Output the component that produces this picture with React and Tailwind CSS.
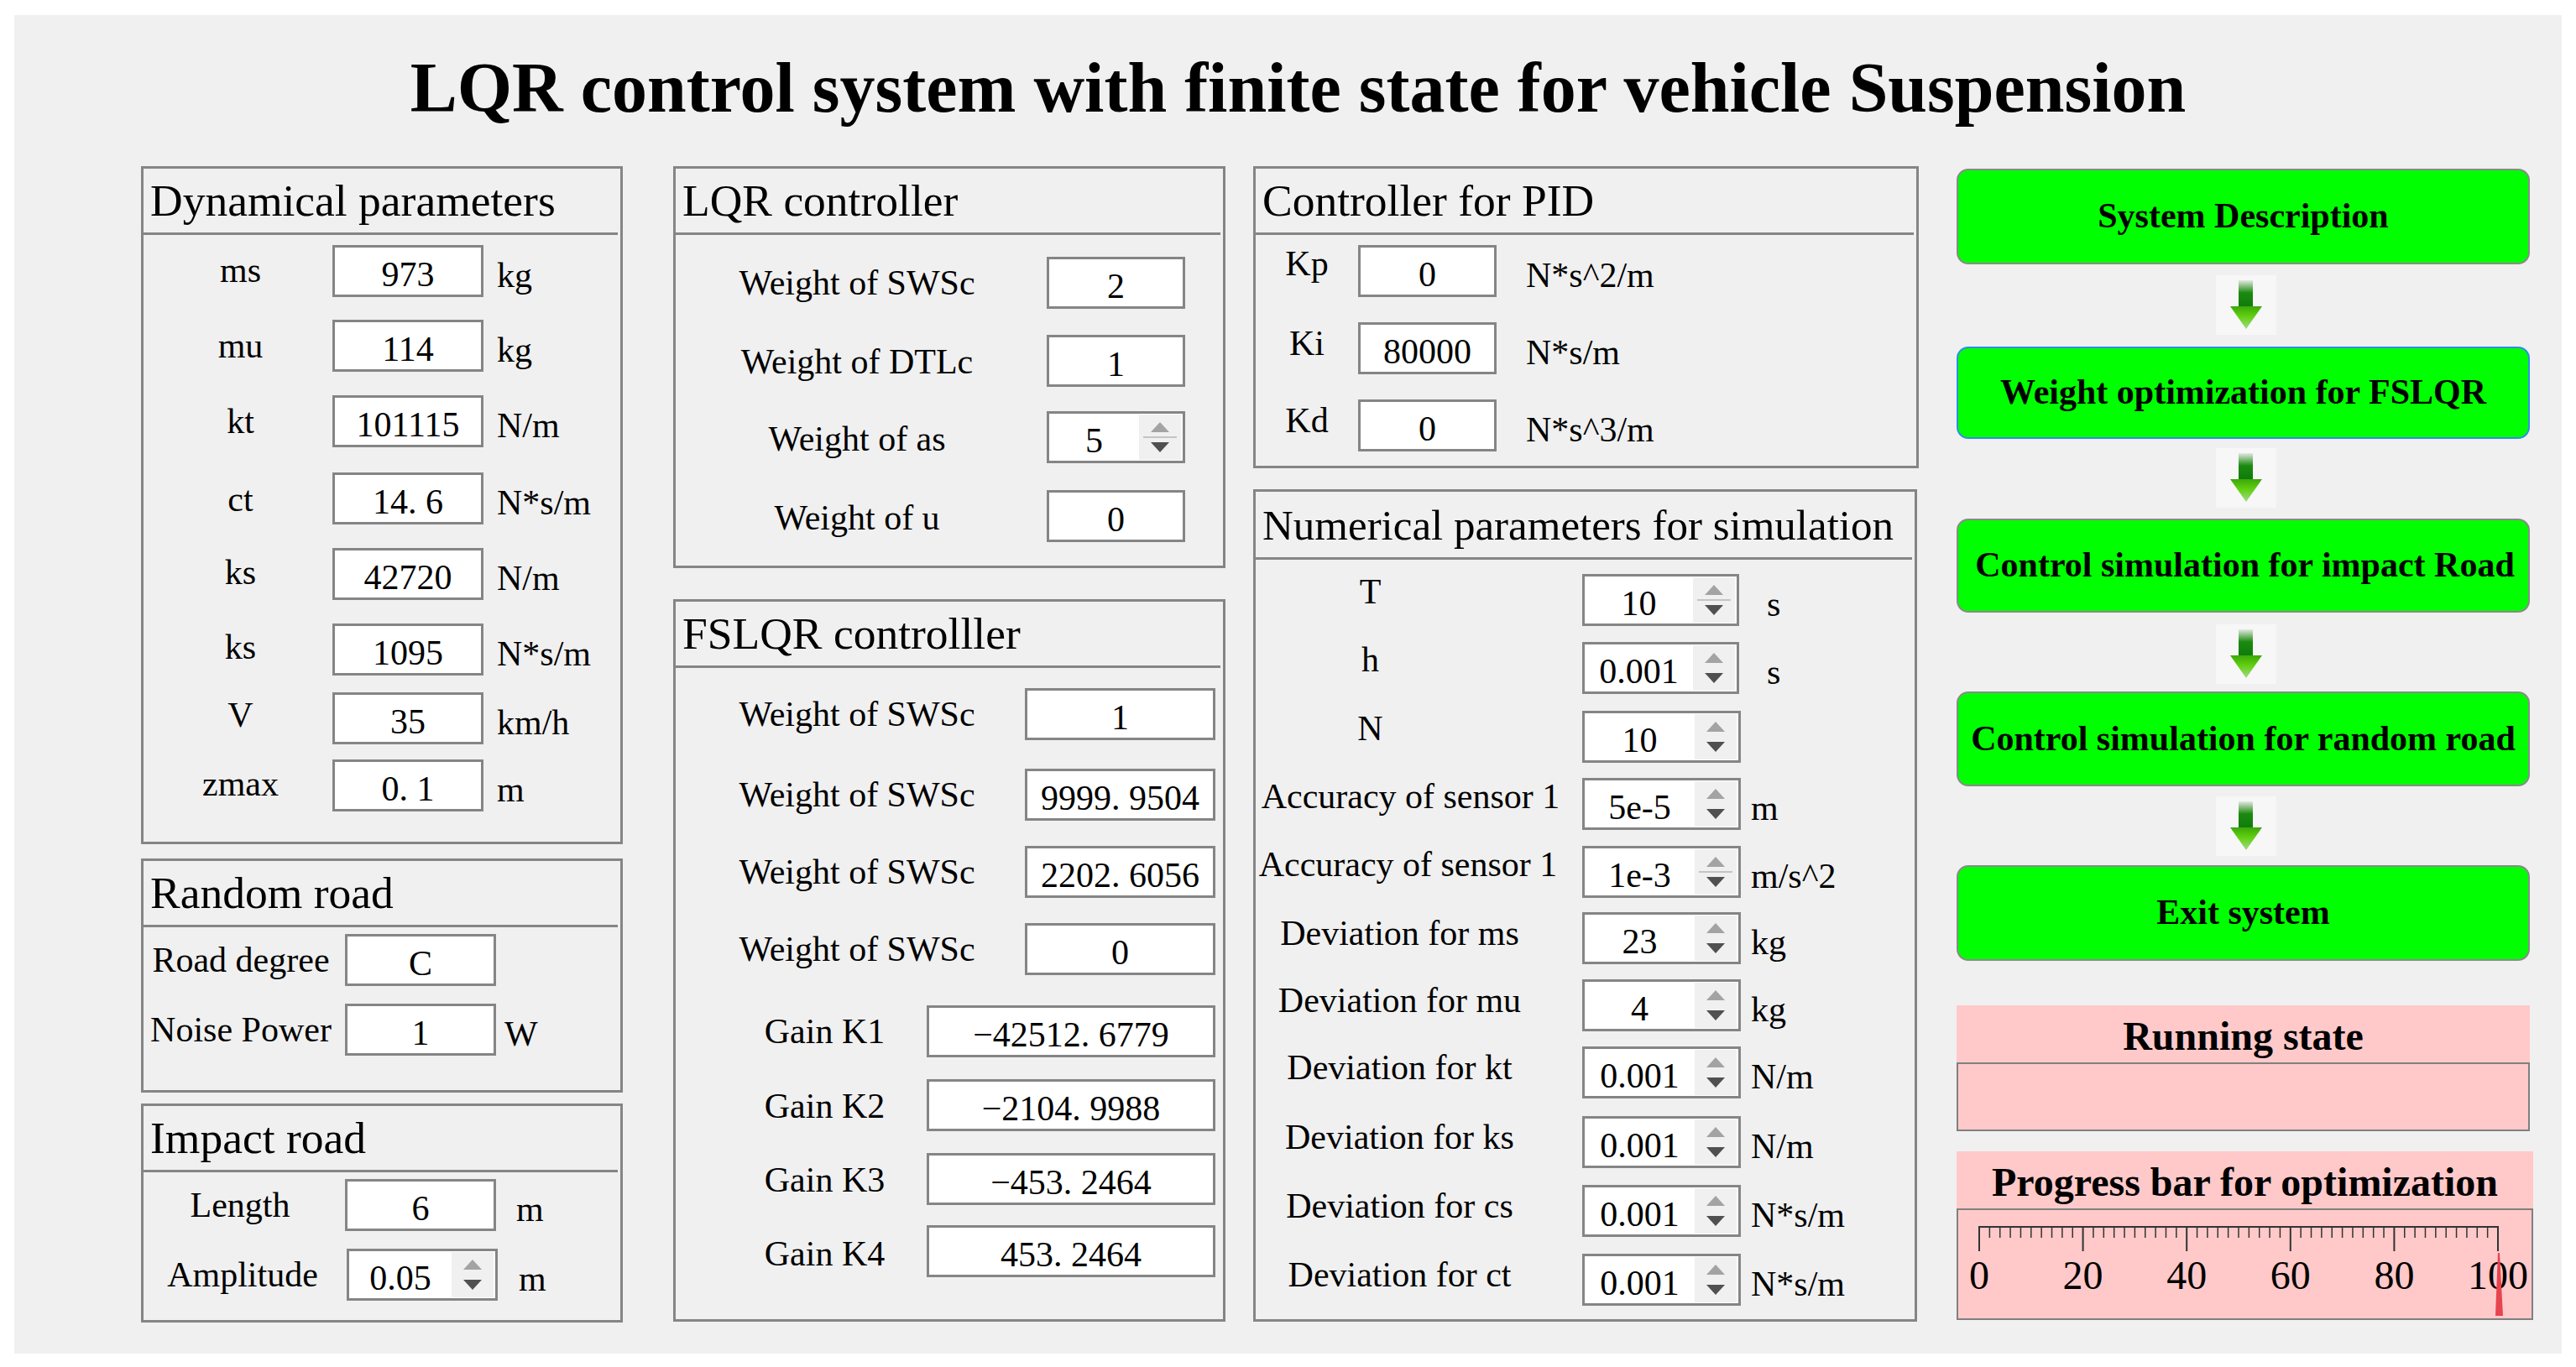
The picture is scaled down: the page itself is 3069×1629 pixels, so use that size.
const serif = { fontFamily: '"Liberation Serif", "Times New Roman", serif' };

const dynamicalRows = [
  { label: 'ms', value: '973', unit: 'kg', rowCls: 'mt-[12px]', labelPad: 'pb-[2px]' },
  { label: 'mu', value: '114', unit: 'kg', rowCls: 'mt-[27px]', labelPad: 'pb-0' },
  { label: 'kt', value: '101115', unit: 'N/m', rowCls: 'mt-[28px]', labelPad: 'pb-0' },
  { label: 'ct', value: '14. 6', unit: 'N*s/m', rowCls: 'mt-[30px]', labelPad: 'pt-[2px]' },
  { label: 'ks', value: '42720', unit: 'N/m', rowCls: 'mt-[28px]', labelPad: 'pb-[4px]' },
  { label: 'ks', value: '1095', unit: 'N*s/m', rowCls: 'mt-[28px]', labelPad: 'pb-[6px]' },
  { label: 'V', value: '35', unit: 'km/h', rowCls: 'mt-[20px]', labelPad: 'pb-[8px]' },
  { label: 'zmax', value: '0. 1', unit: 'm', rowCls: 'mt-[18px]', labelPad: 'pb-[4px]' },
];

const lqrRows = [
  { label: 'Weight of SWSc', value: '2', rowCls: 'mt-[26px]', labelCls: 'w-[442px] pr-[10px]' },
  { label: 'Weight of DTLc', value: '1', rowCls: 'mt-[31px]', labelCls: 'w-[442px] pr-[10px] pt-[2px]' },
  { label: 'Weight of as', value: '5', spin: true, sep: true, rowCls: 'mt-[29px]', labelCls: 'w-[442px] pr-[10px] pt-[4px]' },
  { label: 'Weight of u', value: '0', rowCls: 'mt-[32px]', labelCls: 'w-[442px] pr-[10px] pt-[4px]' },
];

const fslqrRows = [
  { label: 'Weight of SWSc', value: '1', rowCls: 'mt-[24px]', labelCls: 'w-[416px] pl-[16px]', fieldCls: 'w-[227px]' },
  { label: 'Weight of SWSc', value: '9999. 9504', rowCls: 'mt-[34px]', labelCls: 'w-[416px] pl-[16px]', fieldCls: 'w-[227px]' },
  { label: 'Weight of SWSc', value: '2202. 6056', rowCls: 'mt-[30px]', labelCls: 'w-[416px] pl-[16px]', fieldCls: 'w-[227px]' },
  { label: 'Weight of SWSc', value: '0', rowCls: 'mt-[30px]', labelCls: 'w-[416px] pl-[16px]', fieldCls: 'w-[227px]' },
  { label: 'Gain K1', value: '−42512. 6779', rowCls: 'mt-[36px]', labelCls: 'w-[299px] pl-[56px]', fieldCls: 'w-[344px]' },
  { label: 'Gain K2', value: '−2104. 9988', rowCls: 'mt-[26px]', labelCls: 'w-[299px] pl-[56px] pt-[2px]', fieldCls: 'w-[344px]' },
  { label: 'Gain K3', value: '−453. 2464', rowCls: 'mt-[26px]', labelCls: 'w-[299px] pl-[56px] pt-[2px]', fieldCls: 'w-[344px]' },
  { label: 'Gain K4', value: '453. 2464', rowCls: 'mt-[24px]', labelCls: 'w-[299px] pl-[56px] pt-[6px]', fieldCls: 'w-[344px]' },
];

const pidRows = [
  { label: 'Kp', value: '0', unit: 'N*s^2/m', rowCls: 'mt-[12px]', labelCls: 'w-[122px] pb-[18px]' },
  { label: 'Ki', value: '80000', unit: 'N*s/m', rowCls: 'mt-[30px]', labelCls: 'w-[122px] pb-[12px]' },
  { label: 'Kd', value: '0', unit: 'N*s^3/m', rowCls: 'mt-[30px]', labelCls: 'w-[122px] pb-[12px]' },
];

const center = 'pr-[116px] pb-[20px]';
const dev = 'pr-[46px] pb-[12px]';
const numericalRows = [
  { label: 'T', value: '10', unit: 's', spin: true, sep: true, rowCls: 'mt-[17px]', labelCls: center, fieldCls: 'w-[187px]', unitCls: 'ml-[33px]' },
  { label: 'h', value: '0.001', unit: 's', spin: true, rowCls: 'mt-[19px]', labelCls: center, fieldCls: 'w-[187px]', unitCls: 'ml-[33px]' },
  { label: 'N', value: '10', spin: true, rowCls: 'mt-[20px]', labelCls: center },
  { label: 'Accuracy of sensor 1', value: '5e-5', unit: 'm', spin: true, rowCls: 'mt-[18px]', labelCls: 'pr-[20px] pb-[18px]' },
  { label: 'Accuracy of sensor 1', value: '1e-3', unit: 'm/s^2', spin: true, sep: true, rowCls: 'mt-[19px]', labelCls: 'pr-[26px] pb-[18px]' },
  { label: 'Deviation for ms', value: '23', unit: 'kg', spin: true, rowCls: 'mt-[17px]', labelCls: dev },
  { label: 'Deviation for mu', value: '4', unit: 'kg', spin: true, rowCls: 'mt-[18px]', labelCls: dev },
  { label: 'Deviation for kt', value: '0.001', unit: 'N/m', spin: true, rowCls: 'mt-[18px]', labelCls: dev },
  { label: 'Deviation for ks', value: '0.001', unit: 'N/m', spin: true, rowCls: 'mt-[21px]', labelCls: dev },
  { label: 'Deviation for cs', value: '0.001', unit: 'N*s/m', spin: true, rowCls: 'mt-[20px]', labelCls: dev },
  { label: 'Deviation for ct', value: '0.001', unit: 'N*s/m', spin: true, rowCls: 'mt-[20px]', labelCls: dev },
];

const buttons = [
  { text: 'System Description', cls: 'h-[114px] mt-[3px] border-[#8a8a8a]', arrowCls: 'mt-[13px]' },
  { text: 'Weight optimization for FSLQR', cls: 'h-[110px] mt-[14px] border-[#2f8fe6]', arrowCls: 'mt-[11px]' },
  { text: 'Control simulation for impact Road', cls: 'h-[112px] mt-[13px] pl-[4px] border-[#8a8a8a]', arrowCls: 'mt-[14px]' },
  { text: 'Control simulation for random road', cls: 'h-[113px] mt-[9px] border-[#8a8a8a]', arrowCls: 'mt-[12px]' },
  { text: 'Exit system', cls: 'h-[114px] mt-[11px] border-[#8a8a8a]' },
];

function Spinner({ sep }) {
  return (
    <div className="w-[50px] my-[1px] mr-[2px] bg-[#f0f0f0] flex flex-col items-center justify-center shrink-0">
      <svg width="22" height="12" viewBox="0 0 22 12"><path d="M11 0 L22 12 L0 12 Z" fill="#a3a3a3" /></svg>
      <div className={sep ? 'w-[40px] h-[2px] my-[5px] bg-[#c4c4c4]' : 'w-[40px] h-[2px] my-[5px]'}></div>
      <svg width="22" height="12" viewBox="0 0 22 12"><path d="M0 0 L22 0 L11 12 Z" fill="#505050" /></svg>
    </div>
  );
}

function Field({ value, spin, sep, cls = 'w-[180px]' }) {
  return (
    <div className={`${cls} h-[62px] shrink-0 flex bg-white border-[3px] border-[#858585] text-[42px] leading-none text-black`}>
      <div className="flex-1 flex items-center justify-center pt-[8px] whitespace-nowrap">{value}</div>
      {spin && <Spinner sep={sep} />}
    </div>
  );
}

function Row({ label, value, unit, spin, sep, rowCls, labelCls, fieldCls, unitCls = 'ml-[16px]' }) {
  return (
    <div className={`flex items-center ${rowCls}`}>
      <div className={`${labelCls} shrink-0 text-center text-[42px] leading-none whitespace-nowrap`}>{label}</div>
      <Field value={value} spin={spin} sep={sep} cls={fieldCls} />
      {unit && <div className={`${unitCls} pt-[10px] text-[42px] leading-none whitespace-nowrap`}>{unit}</div>}
    </div>
  );
}

function Panel({ title, cls, headCls = 'h-[79px] text-[53.5px]', children }) {
  return (
    <section className={`${cls} border-[3px] border-[#858585] shrink-0`}>
      <div className={`${headCls} mr-[3px] pl-[8px] pt-[2px] border-b-[3px] border-[#858585] flex items-center leading-none whitespace-nowrap`}>
        {title}
      </div>
      {children}
    </section>
  );
}

function FlowArrow({ cls }) {
  return (
    <div className={`${cls} ml-[309px] w-[72px] h-[71px] bg-[#f7f7f7]`}>
      <svg width="72" height="71" viewBox="0 0 72 71">
        <defs>
          <linearGradient id="shaft" x1="0" y1="0" x2="0" y2="1">
            <stop offset="0" stopColor="#e4e9e2" />
            <stop offset="0.45" stopColor="#1c8a10" />
            <stop offset="1" stopColor="#0d7a0a" />
          </linearGradient>
          <linearGradient id="head" x1="0" y1="0" x2="0" y2="1">
            <stop offset="0" stopColor="#3ca70a" />
            <stop offset="0.45" stopColor="#62d010" />
            <stop offset="1" stopColor="#a4d889" />
          </linearGradient>
        </defs>
        <rect x="27" y="6" width="17" height="33" fill="url(#shaft)" />
        <path d="M17 37 L55 37 L36 64 Z" fill="url(#head)" />
      </svg>
    </div>
  );
}

function Ruler() {
  const ticks = Array.from({ length: 51 }, (_, i) => i);
  return (
    <svg width="683" height="54" viewBox="0 0 683 54" className="block">
      <line x1="24" x2="644" y1="20" y2="20" stroke="#333" strokeWidth="2" />
      {ticks.map((i) => {
        const x = 25 + (i * 618) / 50;
        const major = i % 10 === 0;
        return <line key={i} x1={x} x2={x} y1="20" y2={major ? 49 : 33} stroke="#333" strokeWidth={major ? 2 : 1.5} />;
      })}
    </svg>
  );
}

function ProgressBox() {
  const labels = ['0', '20', '40', '60', '80', '100'];
  return (
    <div className="relative h-[133px] border-2 border-[#808080]">
      <Ruler />
      <div className="flex justify-between ml-[25px] mr-[40px] text-[48px] leading-none">
        {labels.map((n) => (
          <div key={n} className="w-0 flex justify-center">{n}</div>
        ))}
      </div>
      <svg width="14" height="76" viewBox="0 0 14 76" className="absolute left-[637px] top-[51px]">
        <path d="M6 0 L8 0 L12 75 L3 75 Z" fill="#e8434f" />
      </svg>
    </div>
  );
}

export default function App() {
  return (
    <div className="w-[3069px] h-[1629px] bg-white pt-[18px] pl-[17px] overflow-hidden text-black" style={serif}>
      <div className="w-[3035px] h-[1595px] bg-[#f0f0f0]">
        <h1 className="h-[180px] pl-[24px] pb-[6px] flex items-center justify-center text-[84px] font-bold leading-none whitespace-nowrap">
          LQR control system with finite state for vehicle Suspension
        </h1>

        <div className="flex pl-[151px]">
          <div className="w-[574px] mr-[60px] shrink-0">
            <Panel title="Dynamical parameters" cls="h-[808px]">
              {dynamicalRows.map((r, i) => (
                <Row key={i} {...r} labelCls={`w-[225px] pl-[6px] ${r.labelPad}`} />
              ))}
            </Panel>
            <Panel title="Random road" cls="h-[279px] mt-[17px]">
              <Row label="Road degree" value="C" rowCls="mt-[8px]" labelCls="w-[240px] pr-[8px]" />
              <Row label="Noise Power" value="1" unit="W" rowCls="mt-[21px]" labelCls="w-[240px] pr-[8px]" unitCls="ml-[10px]" />
            </Panel>
            <Panel title="Impact road" cls="h-[261px] mt-[13px]">
              <Row label="Length" value="6" unit="m" rowCls="mt-[8px]" labelCls="w-[240px] pr-[10px]" unitCls="ml-[24px]" />
              <Row label="Amplitude" value="0.05" unit="m" spin rowCls="mt-[21px]" labelCls="w-[242px] pr-[6px]" unitCls="ml-[25px]" />
            </Panel>
          </div>

          <div className="w-[658px] mr-[33px] shrink-0">
            <Panel title="LQR controller" cls="h-[479px]">
              {lqrRows.map((r, i) => (
                <Row key={i} {...r} fieldCls="w-[165px]" />
              ))}
            </Panel>
            <Panel title="FSLQR controlller" cls="h-[861px] mt-[37px]">
              {fslqrRows.map((r, i) => (
                <Row key={i} {...r} />
              ))}
            </Panel>
          </div>

          <div className="w-[793px] mr-[45px] shrink-0">
            <Panel title="Controller for PID" cls="h-[360px]">
              {pidRows.map((r, i) => (
                <Row key={i} {...r} fieldCls="w-[165px]" unitCls="ml-[35px]" />
              ))}
            </Panel>
            <Panel title="Numerical parameters for simulation" cls="h-[992px] w-[791px] mt-[25px]" headCls="h-[81px] text-[51px]">
              {numericalRows.map((r, i) => (
                <Row key={i} fieldCls="w-[189px]" {...r} labelCls={`w-[389px] ${r.labelCls}`} unitCls={r.unitCls || 'ml-[12px]'} />
              ))}
            </Panel>
          </div>

          <div className="w-[687px] shrink-0">
            {buttons.map((b) => (
              <div key={b.text}>
                <div className={`${b.cls} w-[683px] pb-[2px] bg-[#00ff00] border-2 rounded-[14px] flex items-center justify-center text-[42px] font-bold leading-none whitespace-nowrap`}>
                  {b.text}
                </div>
                {b.arrowCls && <FlowArrow cls={b.arrowCls} />}
              </div>
            ))}

            <div className="w-[683px] mt-[53px] bg-[#ffc9c9]">
              <div className="h-[68px] pt-[5px] flex items-center justify-center text-[48px] font-bold leading-none">Running state</div>
              <div className="h-[82px] border-2 border-[#808080]"></div>
            </div>

            <div className="mt-[24px] bg-[#ffc9c9]">
              <div className="h-[68px] pt-[5px] flex items-center justify-center text-[48px] font-bold leading-none">Progress bar for optimization</div>
              <ProgressBox />
            </div>
          </div>
        </div>
      </div>
    </div>
  );
}
